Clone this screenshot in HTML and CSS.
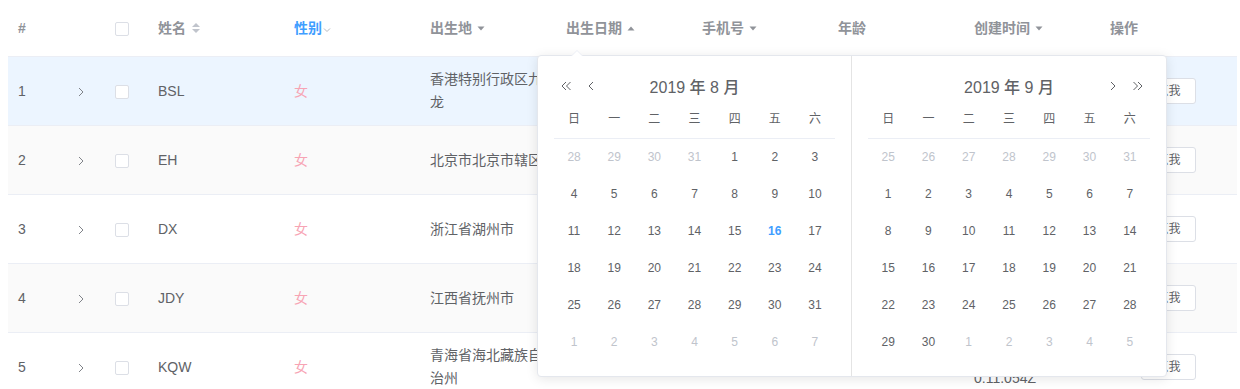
FILE: index.html
```html
<!DOCTYPE html>
<html>
<head>
    <title>用户列表</title>
    <link rel="stylesheet" href="styles.css">
</head>
<body>
    <div class="page">
        <table class="grid">
            <colgroup>
                <col style="width: 60px">
                <col style="width: 37px">
                <col style="width: 43px">
                <col style="width: 136px">
                <col style="width: 136px">
                <col style="width: 136px">
                <col style="width: 136px">
                <col style="width: 136px">
                <col style="width: 136px">
                <col style="width: 136px">
                <col style="width: 137px">
            </colgroup>
            <thead>
                <tr>
                    <th>#</th>
                    <th></th>
                    <th><span class="check"></span></th>
                    <th>姓名<svg class="sort" width="8" height="12" viewBox="0 0 8 12"><path d="M0 5 L4 1 L8 5 Z M0 7 L4 11 L8 7 Z" fill="#c0c4cc"/></svg></th>
                    <th class="active">性别<svg class="chev" width="8" height="6" viewBox="0 0 8 6"><path d="M1 1.5 L4 4.5 L7 1.5" fill="none" stroke="#b4b8bf" stroke-width="1"/></svg></th>
                    <th>出生地<svg class="tri" width="8" height="5" viewBox="0 0 8 5"><path d="M0.5 0.5 L7.5 0.5 L4 4.5 Z" fill="#909399"/></svg></th>
                    <th>出生日期<svg class="tri" width="8" height="5" viewBox="0 0 8 5"><path d="M0.5 4.5 L7.5 4.5 L4 0.5 Z" fill="#909399"/></svg></th>
                    <th>手机号<svg class="tri" width="8" height="5" viewBox="0 0 8 5"><path d="M0.5 0.5 L7.5 0.5 L4 4.5 Z" fill="#909399"/></svg></th>
                    <th>年龄</th>
                    <th>创建时间<svg class="tri" width="8" height="5" viewBox="0 0 8 5"><path d="M0.5 0.5 L7.5 0.5 L4 4.5 Z" fill="#909399"/></svg></th>
                    <th>操作</th>
                </tr>
            </thead>
            <tbody>
                <tr class="current">
                    <td>1</td>
                    <td><svg class="expand" width="6" height="10" viewBox="0 0 6 10"><path d="M1 1 L5 5 L1 9" fill="none" stroke="#808389" stroke-width="1"/></svg></td>
                    <td><span class="check"></span></td>
                    <td>BSL</td>
                    <td class="female">女</td>
                    <td>香港特别行政区九龙</td>
                    <td></td>
                    <td></td>
                    <td></td>
                    <td></td>
                    <td class="ops"><button class="btn">点我</button></td>
                </tr>
                <tr class="striped">
                    <td>2</td>
                    <td><svg class="expand" width="6" height="10" viewBox="0 0 6 10"><path d="M1 1 L5 5 L1 9" fill="none" stroke="#808389" stroke-width="1"/></svg></td>
                    <td><span class="check"></span></td>
                    <td>EH</td>
                    <td class="female">女</td>
                    <td>北京市北京市辖区</td>
                    <td></td>
                    <td></td>
                    <td></td>
                    <td></td>
                    <td class="ops"><button class="btn">点我</button></td>
                </tr>
                <tr>
                    <td>3</td>
                    <td><svg class="expand" width="6" height="10" viewBox="0 0 6 10"><path d="M1 1 L5 5 L1 9" fill="none" stroke="#808389" stroke-width="1"/></svg></td>
                    <td><span class="check"></span></td>
                    <td>DX</td>
                    <td class="female">女</td>
                    <td>浙江省湖州市</td>
                    <td></td>
                    <td></td>
                    <td></td>
                    <td></td>
                    <td class="ops"><button class="btn">点我</button></td>
                </tr>
                <tr class="striped">
                    <td>4</td>
                    <td><svg class="expand" width="6" height="10" viewBox="0 0 6 10"><path d="M1 1 L5 5 L1 9" fill="none" stroke="#808389" stroke-width="1"/></svg></td>
                    <td><span class="check"></span></td>
                    <td>JDY</td>
                    <td class="female">女</td>
                    <td>江西省抚州市</td>
                    <td></td>
                    <td></td>
                    <td></td>
                    <td></td>
                    <td class="ops"><button class="btn">点我</button></td>
                </tr>
                <tr>
                    <td>5</td>
                    <td><svg class="expand" width="6" height="10" viewBox="0 0 6 10"><path d="M1 1 L5 5 L1 9" fill="none" stroke="#808389" stroke-width="1"/></svg></td>
                    <td><span class="check"></span></td>
                    <td>KQW</td>
                    <td class="female">女</td>
                    <td>青海省海北藏族自治州</td>
                    <td></td>
                    <td></td>
                    <td></td>
                    <td>2019-08-16T02:5<br>0:11.054Z</td>
                    <td class="ops"><button class="btn">点我</button></td>
                </tr>
            </tbody>
        </table>

        <div class="picker">
            <span class="arrow"></span>
            <div class="panel left">
                <div class="cal-head">
                    <div class="nav">
                        <svg class="d-arrow" width="12" height="10" viewBox="0 0 12 10"><path d="M6 1 L2 5 L6 9 M10.5 1 L6.5 5 L10.5 9" fill="none" stroke="#606266" stroke-width="1"/></svg>
                        <svg class="s-arrow" width="12" height="10" viewBox="0 0 12 10"><path d="M8 1 L4 5 L8 9" fill="none" stroke="#606266" stroke-width="1"/></svg>
                    </div>
                    <div class="title">2019 年 8 月</div>
                    <div></div>
                </div>
                <table class="cal">
                    <thead>
                        <tr><th>日</th><th>一</th><th>二</th><th>三</th><th>四</th><th>五</th><th>六</th></tr>
                    </thead>
                    <tbody>
                        <tr><td class="off">28</td><td class="off">29</td><td class="off">30</td><td class="off">31</td><td>1</td><td>2</td><td>3</td></tr>
                        <tr><td>4</td><td>5</td><td>6</td><td>7</td><td>8</td><td>9</td><td>10</td></tr>
                        <tr><td>11</td><td>12</td><td>13</td><td>14</td><td>15</td><td class="today">16</td><td>17</td></tr>
                        <tr><td>18</td><td>19</td><td>20</td><td>21</td><td>22</td><td>23</td><td>24</td></tr>
                        <tr><td>25</td><td>26</td><td>27</td><td>28</td><td>29</td><td>30</td><td>31</td></tr>
                        <tr><td class="off">1</td><td class="off">2</td><td class="off">3</td><td class="off">4</td><td class="off">5</td><td class="off">6</td><td class="off">7</td></tr>
                    </tbody>
                </table>
            </div>
            <div class="panel right">
                <div class="cal-head">
                    <div></div>
                    <div class="title">2019 年 9 月</div>
                    <div class="nav end">
                        <svg class="s-arrow" width="12" height="10" viewBox="0 0 12 10"><path d="M4 1 L8 5 L4 9" fill="none" stroke="#606266" stroke-width="1"/></svg>
                        <svg class="d-arrow" width="12" height="10" viewBox="0 0 12 10"><path d="M1.5 1 L5.5 5 L1.5 9 M6 1 L10 5 L6 9" fill="none" stroke="#606266" stroke-width="1"/></svg>
                    </div>
                </div>
                <table class="cal">
                    <thead>
                        <tr><th>日</th><th>一</th><th>二</th><th>三</th><th>四</th><th>五</th><th>六</th></tr>
                    </thead>
                    <tbody>
                        <tr><td class="off">25</td><td class="off">26</td><td class="off">27</td><td class="off">28</td><td class="off">29</td><td class="off">30</td><td class="off">31</td></tr>
                        <tr><td>1</td><td>2</td><td>3</td><td>4</td><td>5</td><td>6</td><td>7</td></tr>
                        <tr><td>8</td><td>9</td><td>10</td><td>11</td><td>12</td><td>13</td><td>14</td></tr>
                        <tr><td>15</td><td>16</td><td>17</td><td>18</td><td>19</td><td>20</td><td>21</td></tr>
                        <tr><td>22</td><td>23</td><td>24</td><td>25</td><td>26</td><td>27</td><td>28</td></tr>
                        <tr><td>29</td><td>30</td><td class="off">1</td><td class="off">2</td><td class="off">3</td><td class="off">4</td><td class="off">5</td></tr>
                    </tbody>
                </table>
            </div>
        </div>
    </div>
</body>
</html>
```

FILE: styles.css
```css
body {
    margin: 0;
    font-family: "Liberation Sans", "Noto Sans CJK SC", sans-serif;
    font-size: 14px;
    color: #606266;
    background-color: #fff;
}
.page {
    position: relative;
    padding-left: 8px;
    height: 389px;
    overflow: hidden;
}
.grid {
    width: 1229px;
    table-layout: fixed;
    border-collapse: separate;
    border-spacing: 0;
}
.grid th {
    text-align: left;
    color: #909399;
    font-weight: bold;
    padding: 17px 10px 16px;
    line-height: 23px;
    border-bottom: 1px solid #ebeef5;
    white-space: nowrap;
}
.grid th.active {
    color: #409eff;
}
.grid tbody tr {
    height: 69px;
}
.grid td {
    padding: 11px 10px;
    line-height: 23px;
    border-bottom: 1px solid #ebeef5;
    vertical-align: middle;
    word-break: break-all;
}
.grid tr.striped td {
    background-color: #fafafa;
}
.grid tr.current td {
    background-color: #ecf5ff;
}
.grid td.female {
    color: #f7a4b4;
}
.grid td.ops {
    text-align: center;
}
.check {
    display: inline-block;
    width: 14px;
    height: 14px;
    box-sizing: border-box;
    border: 1px solid #dcdfe6;
    border-radius: 2px;
    background-color: #fff;
    vertical-align: middle;
}
.sort {
    margin-left: 6px;
    vertical-align: -1px;
}
.chev {
    margin-left: 1px;
    vertical-align: 0;
}
.tri {
    margin-left: 5px;
    vertical-align: 2px;
}
.expand {
    vertical-align: middle;
}
.btn {
    font-family: inherit;
    font-size: 12px;
    line-height: 12px;
    padding: 6px 14px;
    color: #606266;
    background-color: #fff;
    border: 1px solid #dcdfe6;
    border-radius: 3px;
}
.picker {
    position: absolute;
    left: 537px;
    top: 55px;
    width: 630px;
    display: flex;
    box-sizing: border-box;
    background-color: #fff;
    border: 1px solid #e4e7ed;
    border-radius: 4px;
    box-shadow: 0 2px 12px 0 rgba(0, 0, 0, 0.1);
}
.arrow {
    position: absolute;
    top: -6px;
    left: 33px;
    width: 0;
    height: 0;
    border: 6px solid transparent;
    border-top-width: 0;
    border-bottom-color: #ebeef5;
}
.arrow::after {
    content: "";
    position: absolute;
    top: 1px;
    left: -6px;
    border: 6px solid transparent;
    border-top-width: 0;
    border-bottom-color: #fff;
}
.panel {
    width: 50%;
    padding: 16px 16px 15px;
    box-sizing: border-box;
}
.panel.left {
    border-right: 1px solid #e4e4e4;
}
.cal-head {
    display: grid;
    grid-template-columns: 1fr auto 1fr;
    align-items: center;
    height: 28px;
}
.cal-head .title {
    font-size: 16px;
    font-weight: 500;
    color: #606266;
}
.nav {
    display: flex;
    align-items: center;
    gap: 13px;
    padding-left: 6px;
}
.nav.end {
    justify-content: flex-end;
    padding-left: 0;
    padding-right: 6px;
}
.nav svg {
    display: block;
}
.cal {
    width: 100%;
    table-layout: fixed;
    border-collapse: separate;
    border-spacing: 0;
    font-size: 12px;
}
.cal th {
    font-weight: normal;
    color: #606266;
    padding: 9px 0;
    line-height: 20px;
    border-bottom: 1px solid #ebeef5;
}
.cal td {
    padding: 0;
    text-align: center;
    line-height: 37px;
    color: #606266;
}
.cal td.off {
    color: #c0c4cc;
}
.cal td.today {
    color: #409eff;
    font-weight: bold;
}
```
